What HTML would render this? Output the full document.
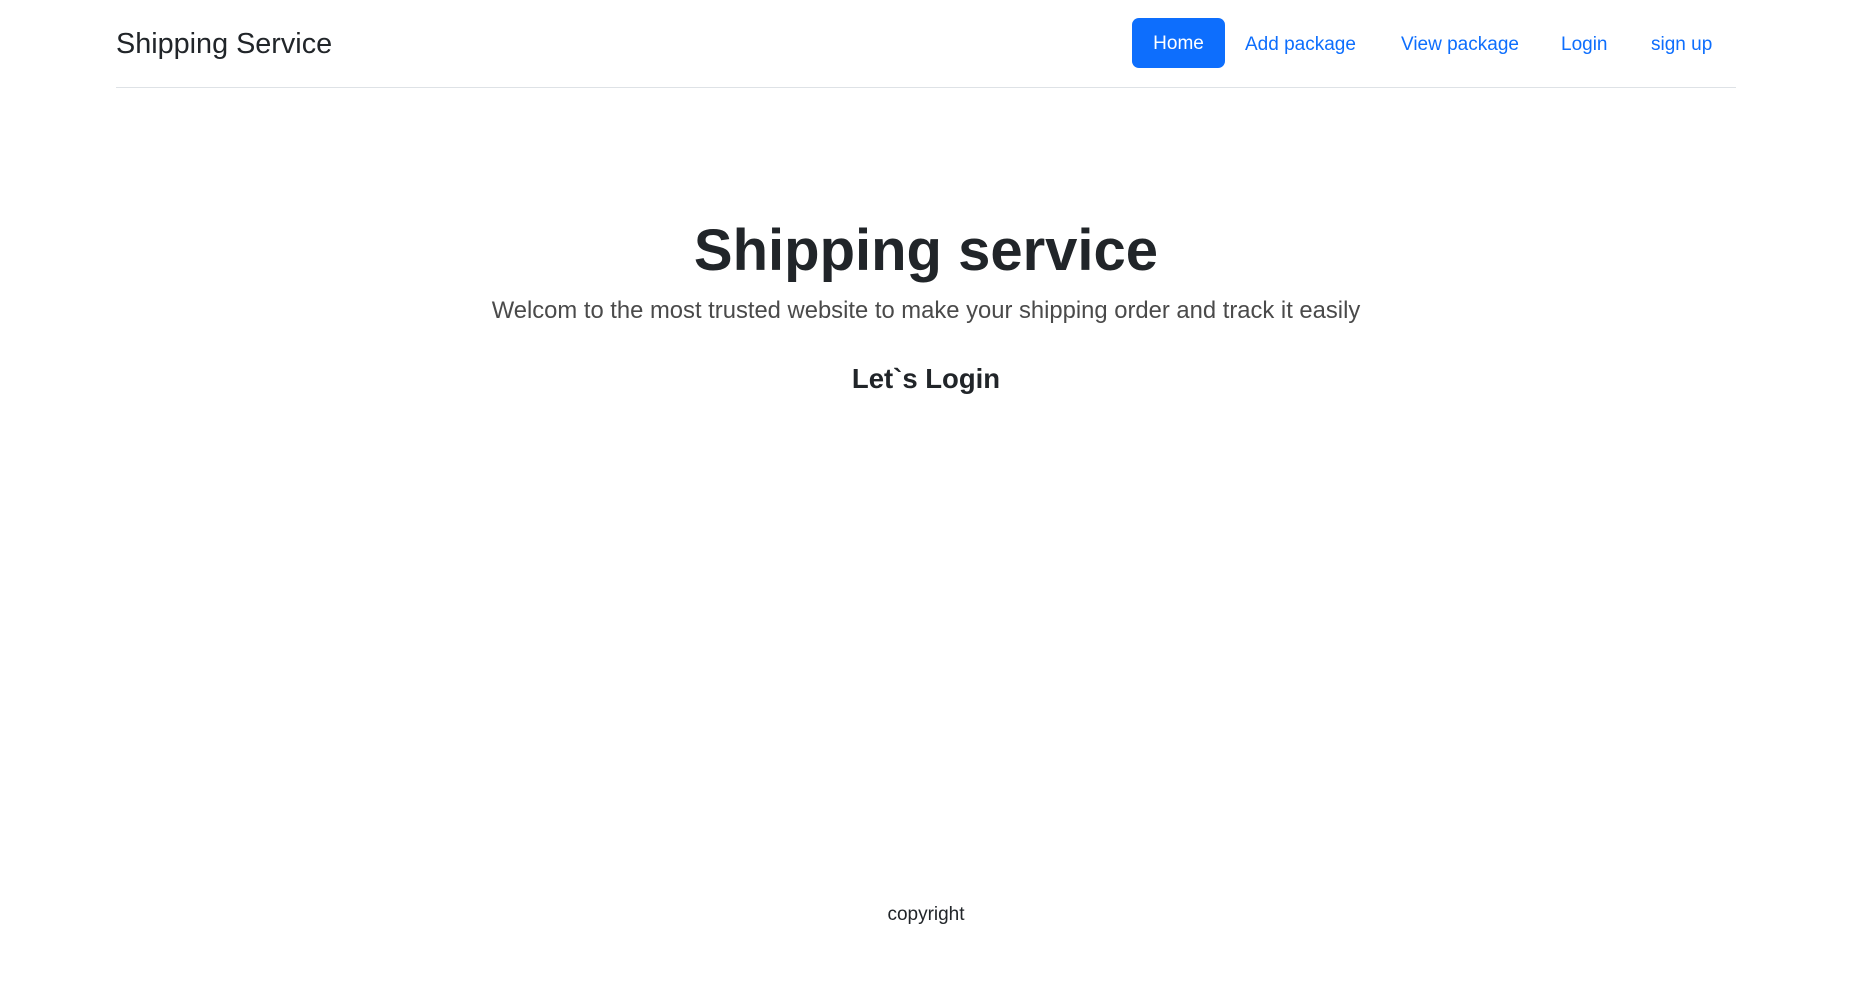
<!DOCTYPE html>
<html><head><meta charset="utf-8"><style>
body{margin:0;width:1852px;height:987px;background:#fff;font-family:"Liberation Sans",sans-serif;color:#212529;position:relative;overflow:hidden}
.a{position:absolute;white-space:nowrap}
.brand{left:116px;top:26px;font-size:28.8px;line-height:36px}
.home{left:1132px;top:18px;width:93px;height:50px;background:#0d6efd;border-radius:7px;color:#fff;font-size:19px;line-height:52px;text-align:center}
.nl{top:31px;font-size:19px;line-height:28px;color:#0d6efd}
.line{left:116px;top:87px;width:1620px;height:1px;background:#dee2e6}
.c{left:0;width:1852px;text-align:center}
</style></head><body>
<div class="a brand">Shipping Service</div>
<div class="a home">Home</div>
<div class="a nl" style="left:1245px">Add package</div>
<div class="a nl" style="left:1401px">View package</div>
<div class="a nl" style="left:1561px">Login</div>
<div class="a nl" style="left:1651px">sign up</div>
<div class="a line"></div>
<div class="a c" style="top:213px;font-size:58px;font-weight:bold;line-height:76px">Shipping service</div>
<div class="a c" style="top:296px;font-size:23.8px;font-weight:300;color:#4a4a4a;line-height:30px">Welcom to the most trusted website to make your shipping order and track it easily</div>
<div class="a c" style="top:362px;font-size:27.5px;font-weight:bold;line-height:34px">Let`s Login</div>
<div class="a c" style="top:903px;font-size:19px;line-height:24px">copyright</div>
</body></html>
